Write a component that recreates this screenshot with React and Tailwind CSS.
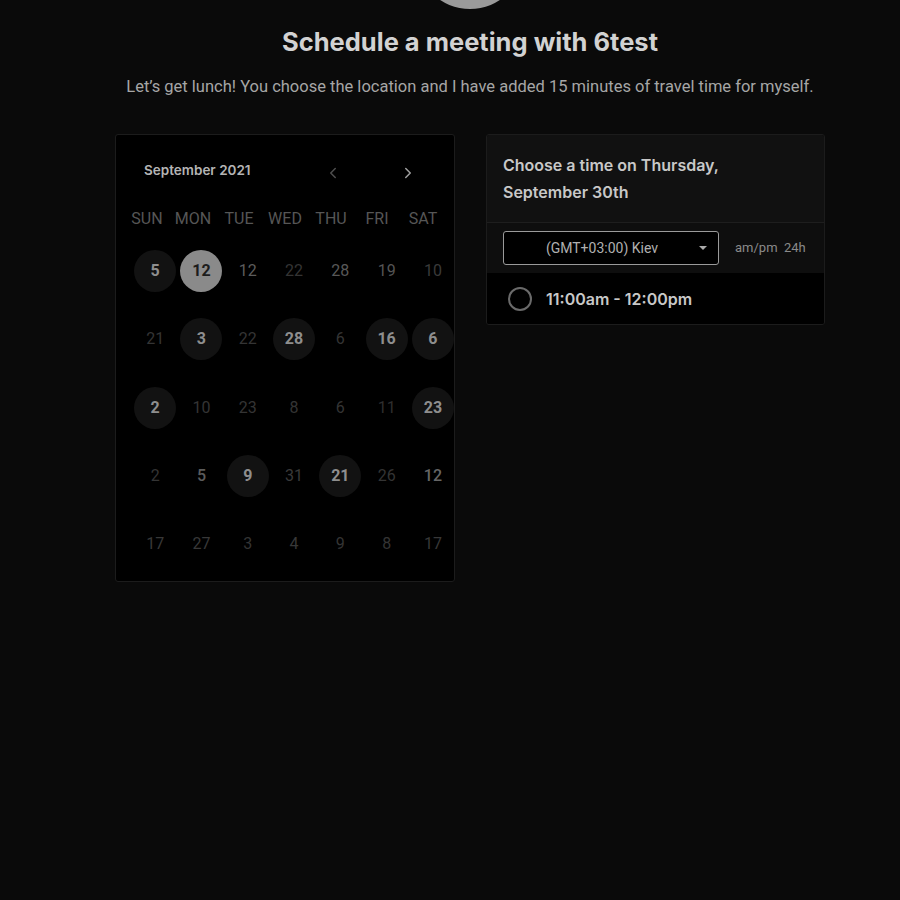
import { ChevronLeft, ChevronRight } from 'lucide-react';

const WEEKDAYS = ['SUN', 'MON', 'TUE', 'WED', 'THU', 'FRI', 'SAT'];

// kind: 'on' = available day (circle), 'sel' = selected, otherwise text colour
const ROWS = [
  [['5', 'on'], ['12', 'sel'], ['12', 'text-[#5c5c5c]'], ['22', 'text-[#343434]'], ['28', 'text-[#585858]'], ['19', 'text-[#555]'], ['10', 'text-[#3a3a3a]']],
  [['21', 'text-[#343434]'], ['3', 'on'], ['22', 'text-[#343434]'], ['28', 'on'], ['6', 'text-[#343434]'], ['16', 'on'], ['6', 'on']],
  [['2', 'on'], ['10', 'text-[#343434]'], ['23', 'text-[#343434]'], ['8', 'text-[#343434]'], ['6', 'text-[#343434]'], ['11', 'text-[#2e2e2e]'], ['23', 'on']],
  [['2', 'text-[#343434]'], ['5', 'text-[#5c5c5c] font-medium'], ['9', 'on'], ['31', 'text-[#3a3a3a]'], ['21', 'on'], ['26', 'text-[#343434]'], ['12', 'text-[#666] font-medium']],
  [['17', 'text-[#383838]'], ['27', 'text-[#383838]'], ['3', 'text-[#343434]'], ['4', 'text-[#383838]'], ['9', 'text-[#343434]'], ['8', 'text-[#343434]'], ['17', 'text-[#383838]']],
];

function Day({ label, kind }) {
  let cls = 'text-[16px] ' + kind;
  if (kind === 'on') cls = 'w-[42px] h-[42px] rounded-full bg-[#121212] text-[#8e8e8e] font-bold text-[16px]';
  if (kind === 'sel') cls = 'w-[42px] h-[42px] rounded-full bg-[#8a8a8a] text-[#1c1c1c] font-bold text-[16px]';
  return (
    <div className="h-[68.3px] flex items-center justify-center">
      <div className={`flex items-center justify-center ${cls}`}>{label}</div>
    </div>
  );
}

export default function App() {
  return (
    <div className="min-h-[900px] bg-[#0a0a0a] overflow-hidden font-['Roboto',sans-serif]">
      <div className="w-[710px] ml-[115px] relative">
        {/* avatar */}
        <div className="mx-auto w-[108px] h-[108px] -mt-[99px] rounded-full bg-[#9a9a9a]" />

        <h1 className="mt-[18px] text-center text-[25.5px] leading-[30px] font-bold text-[#d2d2d2] font-['Inter',sans-serif]">
          Schedule a meeting with 6test
        </h1>
        <p className="mt-[18px] text-center text-[16.5px] leading-[24px] text-[#a6a6a6]">
          Let’s get lunch! You choose the location and I have added 15 minutes of travel time for myself.
        </p>

        <div className="mt-[35px] flex items-start gap-[31px]">
          {/* calendar */}
          <div className="w-[340px] h-[448px] bg-black border border-[#1c1c1c] rounded-[3px] pt-[24px]">
            <div className="h-[22px] flex items-center pl-[28px] pr-[37px]">
              <span className="text-[13.5px] font-semibold text-[#b4b4b4] font-['Inter',sans-serif]">September 2021</span>
              <div className="ml-auto flex items-center gap-[57px] pt-[6px]">
                <ChevronLeft size={18} strokeWidth={2} className="text-[#4e4e4e]" />
                <ChevronRight size={18} strokeWidth={2} className="text-[#a0a0a0]" />
              </div>
            </div>
            <div className="mt-[26px] pl-[8px] grid grid-cols-[repeat(7,46px)] h-[24px] items-center">
              {WEEKDAYS.map((w) => (
                <div key={w} className="text-center text-[16px] text-[#565656]">{w}</div>
              ))}
            </div>
            <div className="mt-[6px] pl-[16px] grid grid-cols-[repeat(7,46.3px)]">
              {ROWS.flat().map(([label, kind], i) => (
                <Day key={i} label={label} kind={kind} />
              ))}
            </div>
          </div>

          {/* time picker */}
          <div className="w-[339px] border border-[#1c1c1c] rounded-[3px] overflow-hidden">
            <div className="bg-[#111] px-[16px] pt-[17px] pb-[16px] border-b border-[#1e1e1e]">
              <h2 className="text-[16px] leading-[27px] font-semibold text-[#c8c8c8] font-['Inter',sans-serif]">
                Choose a time on Thursday,
                <br />
                September 30th
              </h2>
            </div>
            <div className="bg-[#0e0e0e] h-[50px] flex items-center px-[16px] gap-[16px]">
              <div className="relative w-[216px] h-[34px] bg-black border border-[#9a9a9a] rounded-[3px] flex items-center justify-center">
                <span className="text-[14px] text-[#b0b0b0] -ml-[18px]">(GMT+03:00) Kiev</span>
                <span className="absolute right-[11px] top-[14px] w-0 h-0 border-l-[4px] border-r-[4px] border-t-[4px] border-l-transparent border-r-transparent border-t-[#aaa]" />
              </div>
              <span className="text-[13px] text-[#8a8a8a] whitespace-pre">am/pm  24h</span>
            </div>
            <div className="bg-black h-[51px] flex items-center pl-[21px] gap-[14px]">
              <div className="w-[24px] h-[24px] rounded-full border-2 border-[#6a6a6a]" />
              <span className="text-[16px] font-semibold text-[#c8c8c8] font-['Inter',sans-serif]">11:00am - 12:00pm</span>
            </div>
          </div>
        </div>
      </div>
    </div>
  );
}
